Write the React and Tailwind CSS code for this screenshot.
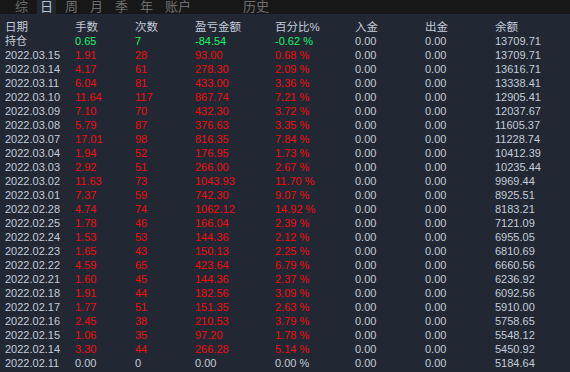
import React from 'react';

const TABS = ['综', '日', '周', '月', '季', '年', '账户'];

const ROWS = [
  ['2022.03.15', '1.91', '28', '93.00', '0.68 %', '13709.71'],
  ['2022.03.14', '4.17', '61', '278.30', '2.09 %', '13616.71'],
  ['2022.03.11', '6.04', '81', '433.00', '3.36 %', '13338.41'],
  ['2022.03.10', '11.64', '117', '867.74', '7.21 %', '12905.41'],
  ['2022.03.09', '7.10', '70', '432.30', '3.72 %', '12037.67'],
  ['2022.03.08', '5.79', '87', '376.63', '3.35 %', '11605.37'],
  ['2022.03.07', '17.01', '98', '816.35', '7.84 %', '11228.74'],
  ['2022.03.04', '1.94', '52', '176.95', '1.73 %', '10412.39'],
  ['2022.03.03', '2.92', '51', '266.00', '2.67 %', '10235.44'],
  ['2022.03.02', '11.63', '73', '1043.93', '11.70 %', '9969.44'],
  ['2022.03.01', '7.37', '59', '742.30', '9.07 %', '8925.51'],
  ['2022.02.28', '4.74', '74', '1062.12', '14.92 %', '8183.21'],
  ['2022.02.25', '1.78', '46', '166.04', '2.39 %', '7121.09'],
  ['2022.02.24', '1.53', '53', '144.36', '2.12 %', '6955.05'],
  ['2022.02.23', '1.65', '43', '150.13', '2.25 %', '6810.69'],
  ['2022.02.22', '4.59', '65', '423.64', '6.79 %', '6660.56'],
  ['2022.02.21', '1.60', '45', '144.36', '2.37 %', '6236.92'],
  ['2022.02.18', '1.91', '44', '182.56', '3.09 %', '6092.56'],
  ['2022.02.17', '1.77', '51', '151.35', '2.63 %', '5910.00'],
  ['2022.02.16', '2.45', '38', '210.53', '3.79 %', '5758.65'],
  ['2022.02.15', '1.06', '35', '97.20', '1.78 %', '5548.12'],
  ['2022.02.14', '3.30', '44', '266.28', '5.14 %', '5450.92'],
  ['2022.02.11', '0.00', '0', '0.00', '0.00 %', '5184.64'],
];

const Row = ({ cells, tone }) => (
  <div className="flex h-[14px] leading-[14px] whitespace-nowrap">
    <div className="w-[70px] text-[#c3ccd9]">{cells[0]}</div>
    <div className={`w-[60px] ${tone}`}>{cells[1]}</div>
    <div className={`w-[60px] ${tone}`}>{cells[2]}</div>
    <div className={`w-[80px] ${tone}`}>{cells[3]}</div>
    <div className={`w-[80px] ${tone}`}>{cells[4]}</div>
    <div className="w-[70px] text-[#c3ccd9]">{cells[5]}</div>
    <div className="w-[70px] text-[#c3ccd9]">{cells[6]}</div>
    <div className="text-[#c3ccd9]">{cells[7]}</div>
  </div>
);

export default function App() {
  return (
    <div
      className="w-[570px] h-[372px] overflow-hidden bg-[#212833]"
      style={{ fontFamily: '"Liberation Sans", "Noto Sans CJK SC", sans-serif' }}
    >
      {/* tab bar */}
      <div className="flex h-[14px] bg-[#171717] pl-[12px] gap-[6px] text-[13px] leading-[14px]">
        {TABS.map((t, i) => (
          <div
            key={t}
            className={i === 1 ? 'px-[3px] bg-[#212833] text-[#b4c2d4]' : 'px-[3px] text-[#6f6f6f]'}
          >
            {t}
          </div>
        ))}
        <div className="ml-[40px] px-[3px] text-[#6f6f6f]">历史</div>
      </div>

      {/* table */}
      <div className="pt-[6px] pl-[5px] text-[11px]">
        <div className="flex h-[14px] leading-[14px] text-[#c3ccd9] text-[11.5px]">
          <div className="w-[70px]">日期</div>
          <div className="w-[60px]">手数</div>
          <div className="w-[60px]">次数</div>
          <div className="w-[80px]">盈亏金额</div>
          <div className="w-[80px]">百分比%</div>
          <div className="w-[70px]">入金</div>
          <div className="w-[70px]">出金</div>
          <div>余额</div>
        </div>
        <Row
          cells={['持仓', '0.65', '7', '-84.54', '-0.62 %', '0.00', '0.00', '13709.71']}
          tone="text-[#19f36a]"
        />
        {ROWS.map((r) => (
          <Row
            key={r[0]}
            cells={[r[0], r[1], r[2], r[3], r[4], '0.00', '0.00', r[5]]}
            tone={r[1] === '0.00' ? 'text-[#c3ccd9]' : 'text-[#f20d0d]'}
          />
        ))}
      </div>
    </div>
  );
}
